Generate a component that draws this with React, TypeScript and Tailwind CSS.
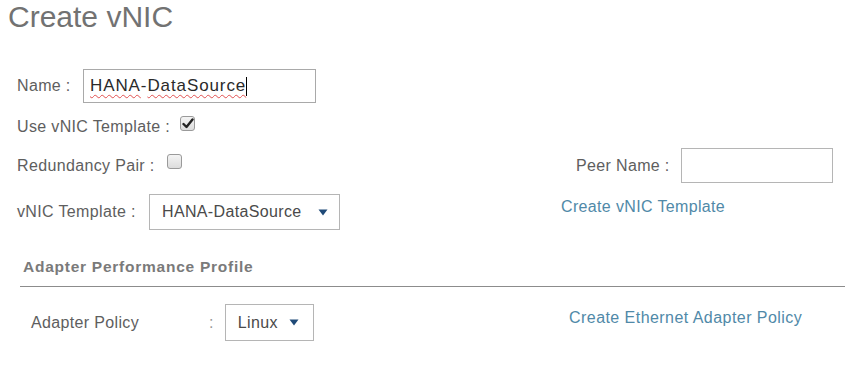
import React from "react";

// small navy triangle used by the dropdowns
const Caret = () => (
    <svg width="10" height="7" viewBox="0 0 10 7" className="shrink-0">
        <path d="M0.5 0.5 L9.5 0.5 L5 6.5 Z" fill="#1f4a78" />
    </svg>
);

const CheckBox = ({ checked }: { checked: boolean }) => (
    <div className="w-[15px] h-[15px] rounded-[3px] border border-[#9a9a9a] bg-gradient-to-b from-[#f4f4f4] to-[#dcdcdc] flex items-center justify-center">
        {checked && (
            <svg width="12" height="11" viewBox="0 0 12 11">
                <path d="M1.5 6 L4.5 9 L10.5 1.5" stroke="#222" strokeWidth="2.4" fill="none" strokeLinecap="round" strokeLinejoin="round" />
            </svg>
        )}
    </div>
);

const Select = ({ value, className }: { value: string; className: string }) => (
    <div className={`flex items-center justify-between border border-[#b5b5b5] bg-white text-[#4a4a4a] ${className}`}>
        <span>{value}</span>
        <Caret />
    </div>
);

const App = () => {
    return (
        <div
            className="w-[845px] h-[372px] bg-white overflow-hidden text-[16px] tracking-[0.35px] text-[#5e5e5e]"
            style={{ fontFamily: '"Liberation Sans", Arial, sans-serif' }}
        >
            {/* 제목 */}
            <h1 className="pl-[8px] h-[34px] text-[30px] leading-[34px] tracking-normal text-[#727272]">Create vNIC</h1>

            {/* Name */}
            <div className="mt-[35px] pl-[17px] h-[34px] flex items-center">
                <span className="w-[66px]">Name :</span>
                <div className="w-[233px] h-[34px] border border-[#a9a9a9] flex items-center pl-[6px] text-[17px] tracking-[0.9px] text-[#2a2a2a]">
                    <span className="underline decoration-wavy decoration-[#e05050] decoration-1 underline-offset-[3px]">HANA</span>
                    <span>-</span>
                    <span className="underline decoration-wavy decoration-[#e05050] decoration-1 underline-offset-[3px]">DataSource</span>
                    <span className="w-px h-[19px] bg-black" />
                </div>
            </div>

            {/* Use vNIC Template */}
            <div className="mt-[10px] pl-[17px] h-[28px] flex items-center">
                <span>Use vNIC Template :</span>
                <div className="ml-[10px] mb-[8px]">
                    <CheckBox checked />
                </div>
            </div>

            {/* Redundancy Pair + Peer Name */}
            <div className="mt-[7px] pl-[17px] h-[35px] flex items-center">
                <div className="w-[559px] flex items-center">
                    <span>Redundancy Pair :</span>
                    <div className="ml-[12px] mb-[8px]">
                        <CheckBox checked={false} />
                    </div>
                </div>
                <span className="w-[105px]">Peer Name :</span>
                <div className="w-[152px] h-[35px] border border-[#b5b5b5]" />
            </div>

            {/* vNIC Template */}
            <div className="mt-[11px] pl-[17px] flex">
                <div className="w-[544px] h-[36px] flex items-center">
                    <span className="w-[132px]">vNIC Template :</span>
                    <Select value="HANA-DataSource" className="w-[191px] h-[36px] pl-[12px] pr-[11px]" />
                </div>
                <a className="mt-[1px] text-[#5089a8] tracking-[0.35px]">Create vNIC Template</a>
            </div>

            {/* Adapter Performance Profile */}
            <div className="mt-[27px] pl-[23px] h-[20px] leading-[20px] font-bold text-[15.5px] tracking-[0.75px] text-[#7a7a7a]">
                Adapter Performance Profile
            </div>
            <div className="mt-[9px] ml-[20px] h-px bg-[#8c8c8c]" />

            {/* Adapter Policy */}
            <div className="mt-[17px] pl-[31px] flex">
                <div className="w-[538px] h-[37px] flex items-center">
                    <span className="w-[178px]">Adapter Policy</span>
                    <span className="text-[#999]">:</span>
                    <Select value="Linux" className="ml-[11px] w-[89px] h-[37px] pl-[12px] pr-[14px]" />
                </div>
                <a className="mt-[2px] text-[#5089a8] tracking-[0.45px]">Create Ethernet Adapter Policy</a>
            </div>
        </div>
    );
};

export default App;
